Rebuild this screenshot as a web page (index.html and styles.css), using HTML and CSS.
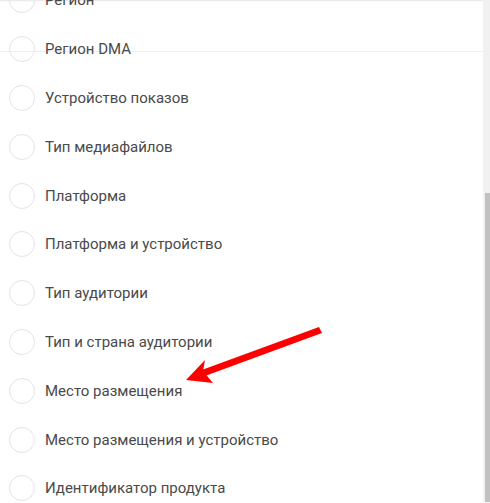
FILE: index.html
```html
<!DOCTYPE html>
<html lang="en">
<head>
    <meta charset="UTF-8">
    <title>Сегменты</title>
    <link rel="stylesheet" href="styles.css">
</head>
<body>
    <div class="panel">
        <div class="divider"></div>
        <div class="list">
            <label class="row"><span class="radio"></span>Регион</label>
            <label class="row"><span class="radio"></span>Регион DMA</label>
            <label class="row"><span class="radio"></span>Устройство показов</label>
            <label class="row"><span class="radio"></span>Тип медиафайлов</label>
            <label class="row"><span class="radio"></span>Платформа</label>
            <label class="row"><span class="radio"></span>Платформа и устройство</label>
            <label class="row"><span class="radio"></span>Тип аудитории</label>
            <label class="row"><span class="radio"></span>Тип и страна аудитории</label>
            <label class="row"><span class="radio"></span>Место размещения</label>
            <label class="row"><span class="radio"></span>Место размещения и устройство</label>
            <label class="row"><span class="radio"></span>Идентификатор продукта</label>
        </div>
        <div class="scrollbar">
            <div class="thumb"></div>
        </div>
        <svg class="arrow" width="490" height="503" viewBox="0 0 490 503">
            <polygon points="319,327 322,333 205,376 199,371" fill="#f00"/>
            <polygon points="186,380 205,360 203,371 213,383" fill="#f00"/>
        </svg>
    </div>
</body>
</html>
```

FILE: styles.css
```css
html, body {
    margin: 0;
    height: 100%;
    background: #ffffff;
    overflow: hidden;
}
.panel {
    position: relative;
    display: flex;
    height: 503px;
    box-shadow: inset 0 2px 2px -1px #e6e6e6;
}
.list {
    position: relative;
    flex: 1;
    display: flex;
    flex-direction: column;
    margin-top: -24px;
}
.row {
    display: flex;
    align-items: center;
    height: 48.8px;
    flex-shrink: 0;
    font-family: Roboto, "Noto Sans", sans-serif;
    font-size: 15px;
    color: #4a4a4a;
}
.radio {
    width: 26px;
    height: 26px;
    border: 1px solid #e4e4e4;
    border-radius: 50%;
    margin: 0 10px 0 9px;
    box-sizing: border-box;
    flex-shrink: 0;
}
.scrollbar {
    position: relative;
    width: 7px;
    background: #f1f1f1;
    display: flex;
    flex-direction: column;
    justify-content: flex-end;
    align-items: flex-end;
    padding-bottom: 1px;
}
.thumb {
    width: 5px;
    height: 309px;
    background: #c1c1c1;
}
.divider {
    position: absolute;
    left: 0;
    right: 0;
    top: 51px;
    height: 1px;
    background: #efefef;
}
.arrow {
    position: absolute;
    left: 0;
    top: 0;
}
```
